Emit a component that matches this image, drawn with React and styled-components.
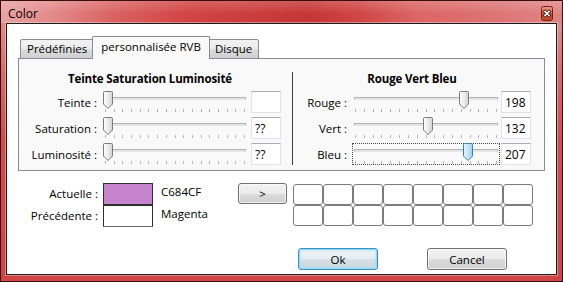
import React from 'react'
import styled, { createGlobalStyle } from 'styled-components'

const GlobalStyle = createGlobalStyle`
  html, body {
    margin: 0;
    padding: 0;
    background: #fff;
  }
  body {
    font-family: 'Open Sans', 'Noto Sans', sans-serif;
    font-size: 11.5px;
    color: #000;
  }
`

const Window = styled.div`
  width: 563px;
  height: 282px;
  box-sizing: border-box;
  border: 1px solid #3a0d0d;
  padding: 0 5px 6px 5px;
  display: flex;
  flex-direction: column;
  background: linear-gradient(180deg, #e59c9c 0%, #db6a6a 25%, #d24b4b 50%, #d04545 100%);
`

const TitleBar = styled.div`
  height: 22px;
  margin: 0 -5px;
  padding: 0 9px 0 7px;
  display: flex;
  align-items: flex-start;
  justify-content: space-between;
  background:
    linear-gradient(180deg, rgba(255, 255, 255, 0.18) 0%, rgba(255, 255, 255, 0) 60%),
    linear-gradient(90deg, #e9a2a2 0%, #e38a8a 9%, #da6262 20%, #d14444 33%, #c93a3a 48%, #c53535 55%, #d04646 64%, #db6565 74%, #dc6f6f 84%, #e08484 100%);
`

const Title = styled.span`
  font-size: 12px;
  line-height: 16px;
  margin-top: 5px;
  color: #000;
`

const CloseButton = styled.div`
  width: 12px;
  height: 15px;
  margin-top: 5px;
  display: flex;
`

const Client = styled.div`
  flex: 1;
  background: #fff;
  border: 1px solid #1c1c1c;
  box-shadow: 0 0 0 1px rgba(255, 255, 255, 0.35);
  padding: 12px 11px 0 11px;
  display: flex;
  flex-direction: column;
`

const TabStrip = styled.div`
  display: flex;
  align-items: flex-end;
  height: 23px;
  margin-left: 2px;
  margin-bottom: -1px;
  position: relative;
  z-index: 1;
`

const Tab = styled.div`
  box-sizing: border-box;
  height: ${p => (p.$active ? '23px' : '20px')};
  padding: ${p => (p.$active ? '0 8px' : '0 6px')};
  margin: ${p => (p.$active ? '0 -2px' : '0')};
  border: 1px solid #898c95;
  border-bottom: ${p => (p.$active ? 'none' : '1px solid #898c95')};
  border-radius: 2px 2px 0 0;
  line-height: ${p => (p.$active ? '19px' : '18px')};
  white-space: nowrap;
  position: relative;
  z-index: ${p => (p.$active ? 2 : 1)};
  background: ${p => (p.$active
    ? '#f9f9f9'
    : 'linear-gradient(180deg, #f2f2f2 0%, #ebebeb 50%, #dddddd 50%, #cfcfcf 100%)')};
`

const Panel = styled.div`
  border: 1px solid #898c95;
  background: #f9f9f9;
  padding: 11px 0 5px 0;
  display: flex;
`

const Section = styled.div`
  display: flex;
  flex-direction: column;
  gap: 4px;
  padding-right: ${p => p.$padRight}px;
`

const Heading = styled.div`
  font-size: 11.5px;
  font-weight: bold;
  letter-spacing: -0.15px;
  text-align: center;
  line-height: 17px;
`

const Divider = styled.div`
  width: 1px;
  background: #3a3a3a;
  margin-top: 2px;
`

const Row = styled.div`
  display: flex;
  align-items: flex-start;
  height: 22px;
`

const RowLabel = styled.div`
  width: ${p => p.$width}px;
  text-align: right;
  line-height: 23px;
  white-space: nowrap;
`

const SliderBox = styled.div`
  position: relative;
  box-sizing: border-box;
  width: ${p => p.$width}px;
  height: 22px;
  margin-left: 5px;
  border: 1px dotted ${p => (p.$focused ? '#4a4a4a' : 'transparent')};
`

const Track = styled.div`
  position: absolute;
  left: 1px;
  right: 1px;
  top: 5px;
  height: 3px;
  box-sizing: border-box;
  border: 1px solid #b3b3b3;
  border-bottom-color: #e6e6e6;
  background: #e3e5e5;
  border-radius: 1px;
`

const Ticks = styled.div`
  position: absolute;
  left: 2px;
  right: 2px;
  top: 17px;
  height: 3px;
  display: flex;
  justify-content: space-between;
`

const Tick = styled.span`
  width: 1px;
  height: 3px;
  background: #b4b4b4;
`

const ThumbWrap = styled.div`
  position: absolute;
  top: -1px;
  width: 10px;
  height: 18px;
  display: flex;
`

const ValueBox = styled.div`
  box-sizing: border-box;
  width: 30px;
  height: 22px;
  margin-left: ${p => p.$gap}px;
  border: 1px solid #e2e3ea;
  border-top-color: #abadb3;
  background: #fff;
  padding: 0 3px;
  font-size: 12px;
  line-height: 21px;
`

const BottomRow = styled.div`
  display: flex;
  align-items: flex-start;
  margin-top: 12px;
`

const CurrentGrid = styled.div`
  display: grid;
  grid-template-columns: 85px 50px 85px;
  grid-auto-rows: 22px;
`

const SwatchLabel = styled.div`
  text-align: right;
  padding-right: 5px;
  line-height: 21px;
  white-space: nowrap;
`

const Swatch = styled.div`
  box-sizing: border-box;
  height: 22px;
  border: 1px solid #2e2e2e;
  border-bottom-color: ${p => (p.$first ? '#2e2e2e' : '#6a6a6a')};
  background: ${p => p.$color};
`

const ColorName = styled.div`
  padding-left: 8px;
  line-height: 18px;
`

const Button = styled.button`
  box-sizing: border-box;
  width: ${p => p.$width}px;
  height: ${p => p.$height}px;
  padding: 0;
  font-family: inherit;
  font-size: 11.5px;
  color: #000;
  border: 1px solid #707070;
  border-radius: 3px;
  background: linear-gradient(180deg, #f2f2f2 0%, #ebebeb 50%, #dddddd 50%, #cfcfcf 100%);
  box-shadow: inset 0 0 0 1px rgba(255, 255, 255, 0.7);
`

const DefaultButton = styled(Button)`
  border-color: #3c8fc4;
  background: linear-gradient(180deg, #f0f4f7 0%, #e6ecf0 50%, #d7e0e6 50%, #cdd7de 100%);
  box-shadow: inset 0 0 0 1px #8fdcf7, inset 0 0 2px 2px rgba(160, 225, 250, 0.5);
`

const ArrowButton = styled(Button)`
  line-height: 19px;
`

const CustomColors = styled.div`
  display: grid;
  grid-template-columns: repeat(8, 30px);
  grid-auto-rows: 21px;
  margin-left: 6px;
  margin-top: 1px;
`

const CustomCell = styled.div`
  border: 1px solid #7c7c7c;
  border-radius: 3px;
  background: #fff;
`

const ButtonRow = styled.div`
  display: flex;
  justify-content: flex-end;
  gap: 49px;
  padding-right: 38px;
  margin-top: 21px;
`

const Thumb = ({ blue }) => (
  <svg width='10' height='18' viewBox='0 0 10 18'>
    <defs>
      <linearGradient id='thumbGrey' x1='0' y1='0' x2='1' y2='0'>
        <stop offset='0' stopColor='#ffffff' />
        <stop offset='0.5' stopColor='#ececec' />
        <stop offset='1' stopColor='#d2d2d2' />
      </linearGradient>
      <linearGradient id='thumbBlue' x1='0' y1='0' x2='1' y2='0'>
        <stop offset='0' stopColor='#eaf6fd' />
        <stop offset='0.5' stopColor='#c4e5f8' />
        <stop offset='1' stopColor='#9fd2f0' />
      </linearGradient>
    </defs>
    <path
      d='M0.5 1.5 Q0.5 0.5 1.5 0.5 H8.5 Q9.5 0.5 9.5 1.5 V13 L5 17.5 L0.5 13 Z'
      fill={blue ? 'url(#thumbBlue)' : 'url(#thumbGrey)'}
      stroke={blue ? '#3c7fb1' : '#7a7a7a'}
      strokeWidth='1'
    />
  </svg>
)

const Slider = ({ value, width, focused }) => {
  const inner = width - 2
  const left = Math.round((value / 255) * (inner - 10))
  return (
    <SliderBox $width={width} $focused={focused}>
      <Track />
      <Ticks>
        {Array.from({ length: 17 }).map((_, i) => <Tick key={i} />)}
      </Ticks>
      <ThumbWrap style={{ left }}>
        <Thumb blue={focused} />
      </ThumbWrap>
    </SliderBox>
  )
}

const hsl = [
  { label: 'Teinte :', value: 0, text: '' },
  { label: 'Saturation :', value: 0, text: '??' },
  { label: 'Luminosité :', value: 0, text: '??' }
]

const rgb = [
  { label: 'Rouge :', value: 198, text: '198' },
  { label: 'Vert :', value: 132, text: '132' },
  { label: 'Bleu :', value: 207, text: '207', focused: true }
]

export default function App () {
  return (
    <>
      <GlobalStyle />
      <Window>
        <TitleBar>
          <Title>Color</Title>
          <CloseButton>
            <svg width='12' height='15' viewBox='0 0 12 15'>
              <defs>
                <linearGradient id='closeBg' x1='0' y1='0' x2='0' y2='1'>
                  <stop offset='0' stopColor='#eba08e' />
                  <stop offset='0.45' stopColor='#d8644a' />
                  <stop offset='0.5' stopColor='#c84a30' />
                  <stop offset='1' stopColor='#c2482c' />
                </linearGradient>
              </defs>
              <rect x='0.5' y='0.5' width='11' height='14' rx='2' fill='url(#closeBg)' stroke='#6e1f14' />
              <path d='M4 5.5 L8 9.5 M8 5.5 L4 9.5' stroke='#4a1a12' strokeWidth='3.2' strokeLinecap='square' />
              <path d='M4 5.5 L8 9.5 M8 5.5 L4 9.5' stroke='#ffffff' strokeWidth='1.6' strokeLinecap='square' />
            </svg>
          </CloseButton>
        </TitleBar>
        <Client>
          <TabStrip>
            <Tab>Prédéfinies</Tab>
            <Tab $active>personnalisée RVB</Tab>
            <Tab>Disque</Tab>
          </TabStrip>
          <Panel>
            <Section $padRight={11}>
              <Heading>Teinte Saturation Luminosité</Heading>
              {hsl.map(r => (
                <Row key={r.label}>
                  <RowLabel $width={78}>{r.label}</RowLabel>
                  <Slider value={r.value} width={146} />
                  <ValueBox $gap={3}>{r.text}</ValueBox>
                </Row>
              ))}
            </Section>
            <Divider />
            <Section $padRight={12}>
              <Heading>Rouge Vert Bleu</Heading>
              {rgb.map(r => (
                <Row key={r.label}>
                  <RowLabel $width={54}>{r.label}</RowLabel>
                  <Slider value={r.value} width={148} focused={r.focused} />
                  <ValueBox $gap={1}>{r.text}</ValueBox>
                </Row>
              ))}
            </Section>
          </Panel>
          <BottomRow>
            <CurrentGrid>
              <SwatchLabel>Actuelle :</SwatchLabel>
              <Swatch $first $color='#C684CF' />
              <ColorName>C684CF</ColorName>
              <SwatchLabel>Précédente :</SwatchLabel>
              <Swatch $color='#ffffff' />
              <ColorName>Magenta</ColorName>
            </CurrentGrid>
            <ArrowButton $width={49} $height={21}>&gt;</ArrowButton>
            <CustomColors>
              {Array.from({ length: 16 }).map((_, i) => <CustomCell key={i} />)}
            </CustomColors>
          </BottomRow>
          <ButtonRow>
            <DefaultButton $width={80} $height={22}>Ok</DefaultButton>
            <Button $width={80} $height={22}>Cancel</Button>
          </ButtonRow>
        </Client>
      </Window>
    </>
  )
}
